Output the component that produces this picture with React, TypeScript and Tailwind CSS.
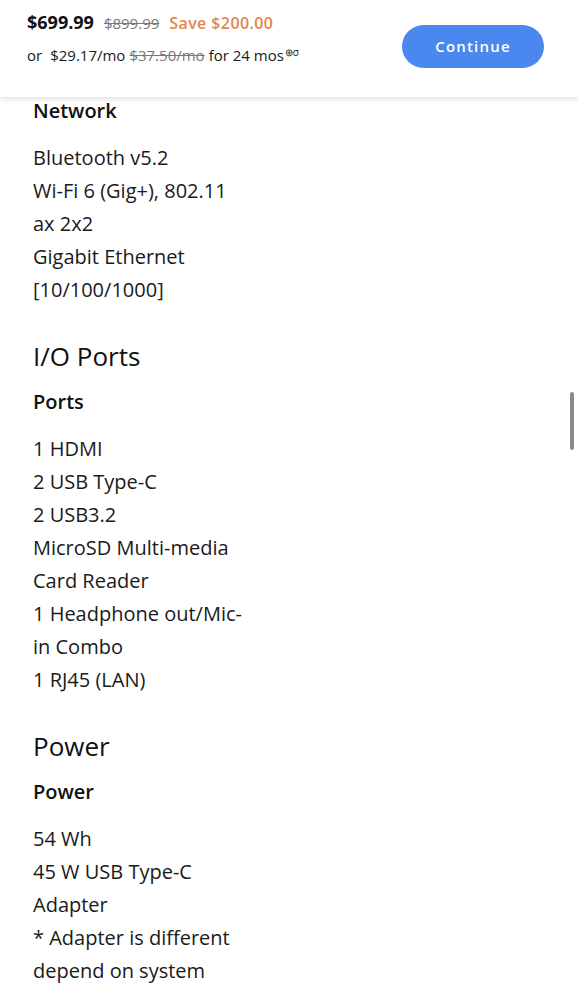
import React from 'react';

type Spec = {
  title?: string;
  label: string;
  lines: string[];
};

const specs: Spec[] = [
  {
    label: 'Network',
    lines: ['Bluetooth v5.2', 'Wi-Fi 6 (Gig+), 802.11', 'ax 2x2', 'Gigabit Ethernet', '[10/100/1000]'],
  },
  {
    title: 'I/O Ports',
    label: 'Ports',
    lines: [
      '1 HDMI',
      '2 USB Type-C',
      '2 USB3.2',
      'MicroSD Multi-media',
      'Card Reader',
      '1 Headphone out/Mic-',
      'in Combo',
      '1 RJ45 (LAN)',
    ],
  },
  {
    title: 'Power',
    label: 'Power',
    lines: ['54 Wh', '45 W USB Type-C', 'Adapter', '* Adapter is different', 'depend on system'],
  },
];

const PriceBar: React.FC = () => (
  <header className="relative z-10 flex h-[97px] items-start justify-between bg-white pl-[27px] pr-[35px] shadow-[0_2px_6px_rgba(0,0,0,0.12)]">
    <div className="pt-[10px]">
      <div className="flex items-baseline leading-[24px]">
        <span className="text-[18px] font-bold text-[#111]">$699.99</span>
        <span className="ml-[10px] text-[15px] text-[#777] line-through">$899.99</span>
        <span className="ml-[10px] text-[16px] font-semibold tracking-[0.4px] text-[#e3864a]">Save $200.00</span>
      </div>
      <div className="mt-[9px] flex items-baseline text-[15px] leading-[22px] text-[#1a1a1a]">
        <span>or</span>
        <span className="ml-[8px]">$29.17/mo</span>
        <span className="ml-[4px] text-[#777] line-through">$37.50/mo</span>
        <span className="ml-[4px]">for 24 mos</span>
        <sup className="ml-[1px] text-[10px]">⊕σ</sup>
      </div>
    </div>
    <button className="mt-[25px] h-[43px] w-[142px] rounded-full bg-[#4a88f0] text-[15px] font-semibold tracking-[1.2px] text-white">
      Continue
    </button>
  </header>
);

const SpecBlock: React.FC<{ spec: Spec }> = ({ spec }) => (
  <section>
    {spec.title && (
      <h2 className="mt-[33px] text-[26px] font-normal leading-[34px] text-[#111]">{spec.title}</h2>
    )}
    <h3 className={`${spec.title ? 'mt-[15px]' : ''} text-[20px] font-semibold leading-[28px] text-[#111]`}>
      {spec.label}
    </h3>
    <ul className="mt-[16px]">
      {spec.lines.map((line) => (
        <li key={line} className="text-[20px] leading-[33px] text-[#1a1a1a]">
          {line}
        </li>
      ))}
    </ul>
  </section>
);

const App: React.FC = () => {
  return (
    <div className="relative h-[1000px] overflow-hidden bg-white font-['Open_Sans',sans-serif]">
      <PriceBar />
      <main className="px-[33px]">
        {specs.map((spec) => (
          <SpecBlock key={spec.label + (spec.title ?? '')} spec={spec} />
        ))}
      </main>
      {/* scroll indicator */}
      <div className="absolute right-[5px] top-[392px] h-[58px] w-[4px] rounded-full bg-[#8a8a8a]" />
    </div>
  );
};

export default App;
